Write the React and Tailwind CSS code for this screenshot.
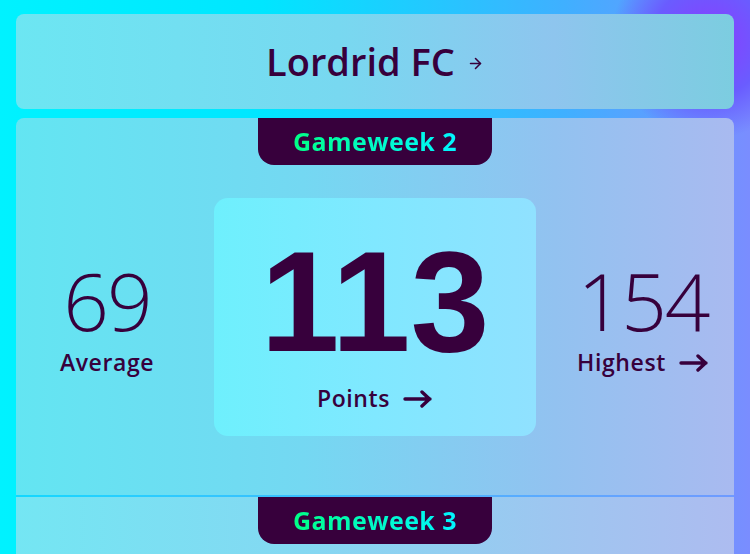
import { ArrowRight } from 'lucide-react';

const sans = { fontFamily: '"Open Sans", Lato, sans-serif' };

function Arrow() {
  return (
    <svg width="30" height="18" viewBox="0 0 30 18" fill="none" stroke="#37003c" strokeWidth="3.4" strokeLinecap="round" strokeLinejoin="round">
      <path d="M2 9h25M19 2l7.5 7-7.5 7" />
    </svg>
  );
}

function GameweekTab({ label }) {
  return (
    <div className="mx-auto flex h-[47px] w-[234px] items-center justify-center rounded-b-[16px] bg-[#37003c]">
      <span className="bg-gradient-to-r from-[#00ff85] to-[#04f5ff] bg-clip-text text-[25px] font-bold tracking-[0.4px] text-transparent">
        {label}
      </span>
    </div>
  );
}

function SideStat({ value, label, arrow }) {
  return (
    <div className="flex flex-col items-center">
      <span className="text-[80px] font-[350] leading-none tracking-[-2px] text-[#37003c]">{value}</span>
      <span className="mt-[11px] flex items-center gap-[13px] text-[23px] font-semibold leading-none tracking-[0.6px] text-[#37003c]">
        {label}
        {arrow && <Arrow />}
      </span>
    </div>
  );
}

export default function App() {
  return (
    <div
      className="relative h-[554px] w-[750px] overflow-hidden bg-[linear-gradient(90deg,#00f2ff_0%,#00e6ff_35%,#3fb0ff_75%,#7a8dff_100%)] px-4 pt-[14px]"
      style={sans}
    >
      <div className="pointer-events-none absolute -right-[60px] -top-[60px] h-[200px] w-[200px] rounded-full bg-[radial-gradient(circle,#8a3dff_0%,#6a5cff_40%,transparent_70%)]" />

      <div className="relative flex h-[95px] items-center justify-center gap-3 rounded-lg bg-[linear-gradient(90deg,#6ce6f2_0%,#78d8f0_45%,#8ec5ee_75%,#7ccde0_100%)]">
        <span className="text-[38px] font-semibold text-[#37003c]">Lordrid FC</span>
        <ArrowRight size={17} strokeWidth={2.2} color="#37003c" className="mt-1" />
      </div>

      <div className="relative mt-[9px] overflow-hidden rounded-t-lg">
        <section className="h-[377px] bg-[linear-gradient(90deg,#63e5f2_0%,#74d8f2_40%,#92c2f0_75%,#a9baf0_100%)]">
          <GameweekTab label="Gameweek 2" />
          <div className="mt-[33px] grid grid-cols-[182px_322px_182px] items-center gap-4">
            <SideStat value="69" label="Average" />
            <div className="flex h-[238px] flex-col items-center rounded-[14px] bg-[linear-gradient(90deg,#6ef0fd_0%,#80e8ff_50%,#90e1ff_100%)] pt-[33px]">
              <span className="text-[142px] font-bold leading-none text-[#37003c]" style={{ fontFamily: '"Liberation Sans", Arial, sans-serif' }}>
                113
              </span>
              <span className="mt-[14px] flex items-center gap-[13px] text-[23px] font-semibold leading-none tracking-[0.6px] text-[#37003c]">
                Points
                <Arrow />
              </span>
            </div>
            <SideStat value="154" label="Highest" arrow />
          </div>
        </section>
        <div className="h-[2px] bg-gradient-to-r from-[#10d8ff] via-[#3fb8ff] to-[#6f9aff]" />
        <section className="h-[60px] bg-[linear-gradient(90deg,#74e6f3_0%,#84d8f2_40%,#9ec6f0_75%,#adbcf0_100%)]">
          <GameweekTab label="Gameweek 3" />
        </section>
      </div>
    </div>
  );
}
